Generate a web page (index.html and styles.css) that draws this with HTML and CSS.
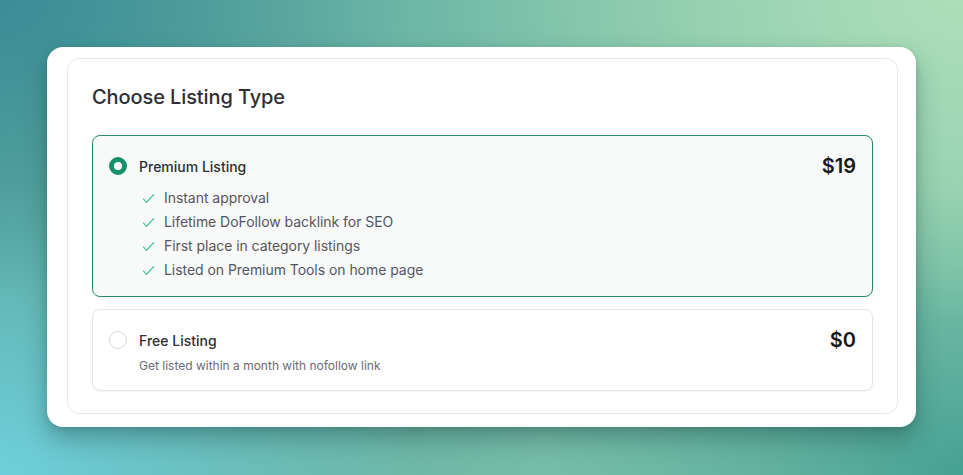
FILE: index.html
```
<!DOCTYPE html>
<html lang="en">
<head>
<meta charset="utf-8">
<title>Choose Listing Type</title>
<link rel="stylesheet" href="styles.css">
</head>
<body>
  <div class="frame">
    <section class="panel">
      <h2 class="title">Choose Listing Type</h2>
      <div class="options">
        <label class="option option--active">
          <div class="option-head">
            <span class="radio radio--on"></span>
            <span class="option-name">Premium Listing</span>
            <span class="price">$19</span>
          </div>
          <ul class="features">
            <li><svg class="check" viewBox="0 0 16 16"><path d="M2.5 8.5l3.5 3.5 7.5-8"/></svg>Instant approval</li>
            <li><svg class="check" viewBox="0 0 16 16"><path d="M2.5 8.5l3.5 3.5 7.5-8"/></svg>Lifetime DoFollow backlink for SEO</li>
            <li><svg class="check" viewBox="0 0 16 16"><path d="M2.5 8.5l3.5 3.5 7.5-8"/></svg>First place in category listings</li>
            <li><svg class="check" viewBox="0 0 16 16"><path d="M2.5 8.5l3.5 3.5 7.5-8"/></svg>Listed on Premium Tools on home page</li>
          </ul>
        </label>
        <label class="option">
          <div class="option-head">
            <span class="radio"></span>
            <span class="option-name">Free Listing</span>
            <span class="price">$0</span>
          </div>
          <p class="option-desc">Get listed within a month with nofollow link</p>
        </label>
      </div>
    </section>
  </div>
</body>
</html>
```
FILE: styles.css
```
* { box-sizing: border-box; }
html, body { margin: 0; height: 100%; }
body {
  width: 963px;
  height: 475px;
  padding: 47px 47px 48px 47px;
  display: flex;
  font-family: Inter, "Noto Sans", sans-serif;
  background-color: #5aa9a2;
  background-image:
    radial-gradient(ellipse 420px 300px at 0% 0%, #3a8c96 0%, rgba(58,140,150,0) 100%),
    radial-gradient(ellipse 520px 320px at 100% 0%, #acdfb8 0%, rgba(172,223,184,0) 100%),
    radial-gradient(ellipse 420px 300px at 0% 100%, #6fcfda 0%, rgba(111,207,218,0) 100%),
    radial-gradient(ellipse 420px 300px at 100% 100%, #45a193 0%, rgba(69,161,147,0) 100%),
    linear-gradient(90deg, #5aa9a0, #8ccbae);
}
.frame {
  flex: 1;
  display: flex;
  background: #fff;
  border-radius: 16px;
  padding: 11px 18px 13px 20px;
  box-shadow: 0 12px 24px rgba(20, 60, 60, 0.35), 0 2px 6px rgba(20, 60, 60, 0.15);
}
.panel {
  flex: 1;
  border: 1px solid #e6e7e9;
  border-radius: 12px;
  padding: 24px;
}
.title {
  margin: 0 0 24px;
  font-size: 20px;
  line-height: 28px;
  font-weight: 500;
  color: #2e2e33;
  letter-spacing: -0.1px;
}
.options {
  display: flex;
  flex-direction: column;
  gap: 12px;
}
.option {
  display: block;
  border: 1px solid #e4e4e7;
  border-radius: 8px;
  padding: 16px;
  background: #fff;
  box-shadow: 0 1px 2px rgba(0,0,0,0.04);
}
.option--active {
  border-color: #2a8a6c;
  background: #f8fafa;
}
.option-head {
  display: flex;
  align-items: center;
  height: 28px;
}
.radio {
  width: 18px;
  height: 18px;
  border-radius: 50%;
  border: 1px solid #d8d8dc;
  background: #fff;
  flex: none;
}
.radio--on {
  border: 5px solid #14906a;
}
.option-name {
  margin-left: 12px;
  font-size: 14px;
  font-weight: 500;
  color: #2e2e33;
  flex: 1;
}
.price {
  font-size: 20px;
  line-height: 28px;
  font-weight: 600;
  color: #18181b;
}
.features {
  list-style: none;
  margin: 8px 0 0;
  padding: 0 0 0 32px;
  display: flex;
  flex-direction: column;
  gap: 4px;
}
.features li {
  display: flex;
  align-items: center;
  font-size: 14px;
  line-height: 20px;
  color: #55555e;
  letter-spacing: -0.05px;
}
.check {
  width: 15px;
  height: 15px;
  margin-right: 8px;
  fill: none;
  stroke: #45c294;
  stroke-width: 1.2;
  stroke-linecap: round;
  stroke-linejoin: round;
}
.option-desc {
  margin: 4px 0 0 30px;
  font-size: 12px;
  line-height: 16px;
  color: #6b6b73;
}
```
